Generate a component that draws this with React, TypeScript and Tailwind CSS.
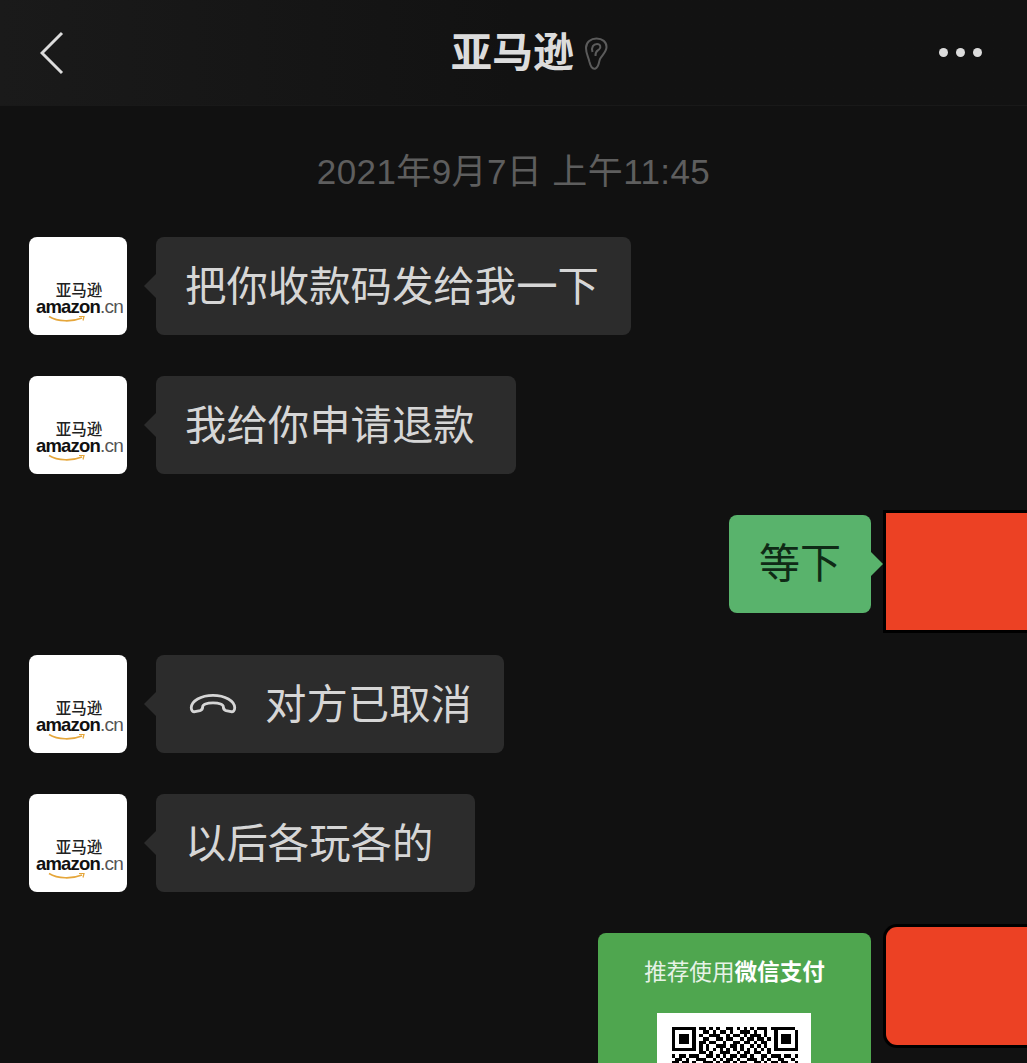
const qrRows = [
  "1111111011010100110101010111011111110",
  "1000001001101011010011101001001000001",
  "1011101010011100101101011101001011101",
  "1011101001100110110010110110101011101",
  "1011101011011001001101101011001011101",
  "1000001010100111011010010101001000001",
  "1111111010101010101010101010101111111",
  "0000000011010011100101101100100000000",
  "1011011100110101011011010011011101101",
  "0110100111001010110100111010100110010",
  "1101101001110101101011001101011011001",
  "0010110110011011010110110010110100110",
]

const Avatar = () => (
  <div className="w-[98px] h-[98px] shrink-0 rounded-lg bg-white flex flex-col items-center pt-[46px]">
    <span className="ml-[2px] text-[15.5px] leading-[15px] font-medium text-[#222]">亚马逊</span>
    <span className="ml-[3px] text-[18.5px] leading-[18px] text-[#111] tracking-[-0.8px] whitespace-nowrap font-bold">
      amazon<span className="font-normal text-[#555] text-[19px]">.cn</span>
    </span>
    <svg width="40" height="8" viewBox="0 0 38 8" className="-ml-[22px] -mt-[1px]">
      <path d="M1 1.5 C10 7 24 7 34 3" fill="none" stroke="#e5a63a" strokeWidth="1.6" />
      <path d="M31 1.5 L36 1.5 L35 5.5" fill="none" stroke="#e5a63a" strokeWidth="1.2" />
    </svg>
  </div>
)

const HangupIcon = () => (
  <svg width="50" height="24" viewBox="0 0 46 22" className="ml-[3px] mr-[27px] -mt-[3px]">
    <path
      d="M3 14.5 C3 8 12 3 23 3 C34 3 43 8 43 14.5 C43 17 41.5 18.5 39.5 18 L35 17 C33 16.5 32.5 15.5 32.5 13.5 C32.5 11.5 29 10 23 10 C17 10 13.5 11.5 13.5 13.5 C13.5 15.5 13 16.5 11 17 L6.5 18 C4.5 18.5 3 17 3 14.5 Z"
      fill="none"
      stroke="#d6d6d6"
      strokeWidth="2.6"
      strokeLinejoin="round"
    />
  </svg>
)

const LeftRow = ({ pad, children }: { pad: string; children: React.ReactNode }) => (
  <div className="flex pl-[29px] mb-[41px]">
    <Avatar />
    <div className={`relative ml-[29px] h-[98px] flex items-center rounded-lg bg-[#2c2c2c] pl-[29px] pt-[2px] text-[41.4px] text-[#d6d6d6] whitespace-nowrap ${pad}`}>
      <span className="absolute -left-[12px] top-[37px] w-0 h-0 border-y-[12px] border-y-transparent border-r-[12px] border-r-[#2c2c2c]" />
      {children}
    </div>
  </div>
)

export default function App() {
  return (
    <div
      className="w-[1027px] h-[1063px] overflow-hidden bg-[#111111]"
      style={{ fontFamily: '"Liberation Sans", "Noto Sans CJK SC", sans-serif' }}
    >
      {/* top bar */}
      <div className="relative h-[106px] flex items-center justify-between border-b border-[#191919] bg-gradient-to-r from-[#1a1a1a] via-[#121212] to-[#121212] pl-[40px] pr-[45px]">
        <svg width="24" height="44" viewBox="0 0 24 44">
          <path d="M22 2 L2 22 L22 42" fill="none" stroke="#dcdcdc" strokeWidth="3" />
        </svg>
        <div className="absolute left-[451px] top-[27px] flex items-center">
          <span className="text-[41px] leading-[52px] font-bold text-[#dcdcdc]">亚马逊</span>
          <svg width="24" height="34" viewBox="0 0 24 34" className="ml-[10px] mt-[1px]">
            <path
              d="M2 11 C2 5 7 1.5 12.5 1.5 C18.5 1.5 22.5 5 22.5 10 C22.5 15 18 18 16 22 C14.5 26 15 30 11.5 31.5 C8 32.5 6.5 29 5.5 25 C4.5 20 2 17 2 11 Z M8.5 15 C7 10 9.5 7 13 7 C16.5 7 17.5 10.5 15 12.5 C13 14 11 14.5 11.5 19"
              fill="none"
              stroke="#5b5b5b"
              strokeWidth="2"
            />
          </svg>
        </div>
        <div className="flex gap-[8px]">
          <span className="w-[9px] h-[9px] rounded-full bg-[#dcdcdc]" />
          <span className="w-[9px] h-[9px] rounded-full bg-[#dcdcdc]" />
          <span className="w-[9px] h-[9px] rounded-full bg-[#dcdcdc]" />
        </div>
      </div>

      {/* date */}
      <div className="h-[131px] pt-[44px] text-center text-[35px] tracking-[0.4px] leading-[44px] text-[#5e5e5e]">
        2021年9月7日 上午11:45
      </div>

      <LeftRow pad="pr-[32px]">把你收款码发给我一下</LeftRow>
      <LeftRow pad="pr-[41px]">我给你申请退款</LeftRow>

      {/* own text */}
      <div className="flex justify-end mb-[42px]">
        <div className="relative h-[98px] flex items-center rounded-lg bg-[#59b36c] px-[30px] pt-[2px] text-[41px] text-[#0f2a16]">
          等下
          <span className="absolute -right-[12px] top-[37px] w-0 h-0 border-y-[12px] border-y-transparent border-l-[12px] border-l-[#59b36c]" />
        </div>
        <div className="ml-[12px] -mt-[5px] -mb-[20px] w-[144px] h-[123px] border-y-[3px] border-l-[3px] border-black bg-[#ec4124]" />
      </div>

      <LeftRow pad="pr-[32px]">
        <HangupIcon />
        对方已取消
      </LeftRow>
      <LeftRow pad="pr-[42px]">以后各玩各的</LeftRow>

      {/* own payment card */}
      <div className="flex justify-end">
        <div className="w-[273px] h-[200px] rounded-lg bg-[#4fa64f] flex flex-col items-center pt-[24px]">
          <div className="text-[22.6px] leading-[32px] text-[#e6f2e6] whitespace-nowrap">
            推荐使用<span className="font-bold text-white">微信支付</span>
          </div>
          <div className="mt-[24px] -ml-[1px] w-[154px] h-[154px] bg-white pt-[14px] pl-[15px]">
            <svg width="126" height="41" viewBox="0 0 37 12" shapeRendering="crispEdges" className="blur-[0.5px]">
              {qrRows.map((row, y) =>
                row.split("").map((c, x) =>
                  c === "1" ? <rect key={`${x}-${y}`} x={x} y={y} width="1" height="1" fill="#000" /> : null
                )
              )}
            </svg>
          </div>
        </div>
        <div className="ml-[12px] -mt-[9px] w-[144px] h-[124px] rounded-l-[14px] border-y-[3px] border-l-[3px] border-black bg-[#ec4124]" />
      </div>
    </div>
  )
}
